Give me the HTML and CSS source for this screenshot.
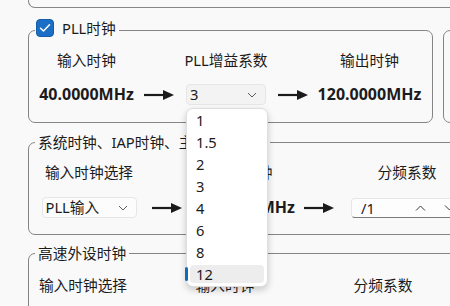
FILE: index.html
```html
<!DOCTYPE html>
<html lang="zh-CN">
<head>
<meta charset="utf-8">
<title>时钟设置</title>
<link rel="stylesheet" href="styles.css">
</head>
<body>
<div class="page">
  <div class="prev"></div>

  <div class="row">
    <fieldset class="group pll">
      <legend class="check-legend">
        <span class="legend-inner">
          <span class="checkbox"><svg width="12" height="10" viewBox="0 0 12 10"><path d="M1.5 5.2 L4.5 8 L10.5 1.8" fill="none" stroke="#fff" stroke-width="1.5" stroke-linecap="round" stroke-linejoin="round"/></svg></span>
          <span>PLL时钟</span>
        </span>
      </legend>
      <div class="grid grid-pll">
        <div class="label">输入时钟</div>
        <div></div>
        <div class="label">PLL增益系数</div>
        <div></div>
        <div class="label">输出时钟</div>

        <div class="value">40.0000MHz</div>
        <div class="arrow"><svg width="30" height="10" viewBox="0 0 30 10"><path d="M0 5 H21" stroke="#1b1b1b" stroke-width="2.2"/><path d="M19 0 L30 5 L19 10 Z" fill="#1b1b1b"/></svg></div>
        <div class="combo combo-gain">
          <span>3</span>
          <svg class="chev" width="10" height="6" viewBox="0 0 10 6"><path d="M1 1 L5 5 L9 1" fill="none" stroke="#5c5c5c" stroke-width="1"/></svg>
          <ul class="popup">
            <li>1</li>
            <li>1.5</li>
            <li>2</li>
            <li>3</li>
            <li>4</li>
            <li>6</li>
            <li>8</li>
            <li class="hover">12</li>
          </ul>
        </div>
        <div class="arrow"><svg width="30" height="10" viewBox="0 0 30 10"><path d="M0 5 H21" stroke="#1b1b1b" stroke-width="2.2"/><path d="M19 0 L30 5 L19 10 Z" fill="#1b1b1b"/></svg></div>
        <div class="value">120.0000MHz</div>
      </div>
    </fieldset>
    <div class="group side"></div>
  </div>

  <fieldset class="group wide g2">
    <legend>系统时钟、IAP时钟、主频外设时钟</legend>
    <div class="grid grid-sys">
      <div class="label">输入时钟选择</div>
      <div></div>
      <div class="label">输入时钟</div>
      <div></div>
      <div class="label">分频系数</div>

      <div class="combo combo-src">
        <span>PLL输入</span>
        <svg class="chev" width="10" height="6" viewBox="0 0 10 6"><path d="M1 1 L5 5 L9 1" fill="none" stroke="#5c5c5c" stroke-width="1"/></svg>
      </div>
      <div class="arrow"><svg width="30" height="10" viewBox="0 0 30 10"><path d="M0 5 H21" stroke="#1b1b1b" stroke-width="2.2"/><path d="M19 0 L30 5 L19 10 Z" fill="#1b1b1b"/></svg></div>
      <div class="value">120.0000MHz</div>
      <div class="arrow"><svg width="30" height="10" viewBox="0 0 30 10"><path d="M0 5 H21" stroke="#1b1b1b" stroke-width="2.2"/><path d="M19 0 L30 5 L19 10 Z" fill="#1b1b1b"/></svg></div>
      <div class="spin">
        <span>/1</span>
        <span class="spin-btns">
          <svg width="11" height="6" viewBox="0 0 11 6"><path d="M1 5.5 L5.5 1 L10 5.5" fill="none" stroke="#3a3a3a" stroke-width="1"/></svg>
          <svg width="11" height="6" viewBox="0 0 11 6"><path d="M1 0.5 L5.5 5 L10 0.5" fill="none" stroke="#3a3a3a" stroke-width="1"/></svg>
        </span>
      </div>
    </div>
  </fieldset>

  <fieldset class="group wide g3">
    <legend>高速外设时钟</legend>
    <div class="grid grid-hs">
      <div class="label">输入时钟选择</div>
      <div></div>
      <div class="label">输入时钟</div>
      <div></div>
      <div class="label">分频系数</div>
    </div>
  </fieldset>
</div>
</body>
</html>
```

FILE: styles.css
```css
html, body {
  margin: 0;
  padding: 0;
}

body {
  width: 450px;
  height: 306px;
  overflow: hidden;
  background: #f9f9f9;
  font-family: "Noto Sans", "Noto Sans CJK SC", sans-serif;
  font-size: 14.7px;
  color: #1b1b1b;
}

.page {
  padding-left: 28px;
  width: 700px;
}

.prev {
  height: 7px;
  border: 1px solid #858585;
  border-top: 0;
  border-radius: 0 0 0 7px;
}

.row {
  display: flex;
  align-items: flex-start;
  gap: 10px;
  margin-top: 11px;
}

.group {
  margin: 0;
  padding: 0;
  min-width: 0;
  box-sizing: border-box;
  border: 1px solid #858585;
  border-radius: 7px;
}

.pll {
  flex: none;
  width: 405px;
  padding-bottom: 17px;
}

.side {
  flex: none;
  width: 200px;
  height: 93px;
  margin-top: 11px;
}

.wide {
  width: 640px;
  margin-top: 10px;
}

.g3 {
  margin-top: 9px;
  padding-bottom: 20px;
}

legend {
  margin-left: 6px;
  padding: 0 3px;
  line-height: 18px;
  white-space: nowrap;
}

.check-legend {
  padding: 0 3px 4px 1px;
}

.legend-inner {
  display: flex;
  align-items: center;
  gap: 8px;
}

.checkbox {
  width: 18px;
  height: 18px;
  box-sizing: border-box;
  border: 1px solid #135ea9;
  border-radius: 4px;
  background: #1b6ec6;
  display: flex;
  align-items: center;
  justify-content: center;
}

.grid {
  display: grid;
  align-items: center;
  justify-items: center;
}

.grid-pll {
  grid-template-columns: 115px 30px 104px 30px 123px;
  padding-top: 9px;
  row-gap: 14px;
}

.grid-sys {
  grid-template-columns: 120px 36px 116px 36px 140px;
  padding-top: 11px;
  padding-bottom: 16px;
  row-gap: 15px;
}

.grid-hs {
  grid-template-columns: 108px 30px 116px 30px 140px;
  padding-top: 13px;
}

.label {
  line-height: 20px;
  white-space: nowrap;
}

.value {
  font-size: 16px;
  font-weight: 700;
  line-height: 21px;
  white-space: nowrap;
}

.arrow {
  display: flex;
  align-items: center;
}

.combo {
  position: relative;
  box-sizing: border-box;
  height: 21px;
  display: flex;
  align-items: center;
  justify-content: space-between;
  padding: 0 8px 0 3px;
  border: 1px solid #e6e6e6;
  border-radius: 4px;
  background: #f3f3f3;
  line-height: 19px;
  white-space: nowrap;
}

.combo-gain {
  width: 80px;
}

.combo-src {
  width: 95px;
  background: #fcfcfc;
}

.popup {
  position: absolute;
  left: -1px;
  top: 23px;
  z-index: 10;
  width: 82px;
  box-sizing: border-box;
  display: flex;
  flex-direction: column;
  margin: 0;
  padding: 0 0 1px;
  list-style: none;
  background: #ffffff;
  border: 1px solid #dedede;
  border-radius: 7px;
  box-shadow: 0 3px 7px rgba(0, 0, 0, 0.2);
}

.popup li {
  position: relative;
  height: 18px;
  line-height: 18px;
  margin: 2px 3px;
  padding-left: 6px;
  border-radius: 4px;
}

.popup li.hover {
  background: #ededed;
}

.popup li.hover::before {
  content: "";
  position: absolute;
  left: -5px;
  top: 2px;
  width: 3px;
  height: 14px;
  border-radius: 2px;
  background: #0f6cbd;
}

.spin {
  box-sizing: border-box;
  width: 112px;
  height: 20px;
  display: flex;
  align-items: center;
  padding-left: 9px;
  border: 1px solid #e6e6e6;
  border-bottom-color: #7a7a7a;
  border-radius: 4px;
  background: #fdfdfd;
  line-height: 18px;
}

.spin-btns {
  margin-left: auto;
  display: flex;
  align-items: center;
  gap: 18px;
  padding-right: 7px;
}
```
